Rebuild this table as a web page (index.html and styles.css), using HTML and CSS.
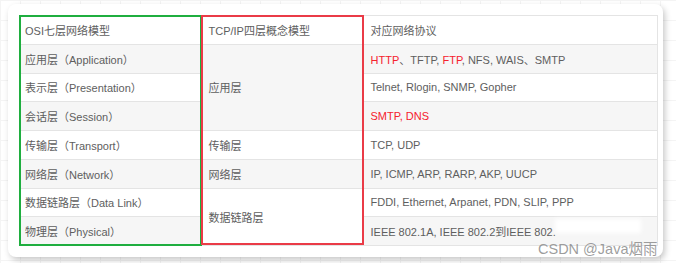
FILE: index.html
```html
<!DOCTYPE html>
<html lang="zh">
<head>
<meta charset="utf-8">
<link rel="stylesheet" href="styles.css">
</head>
<body>
<div class="card">
  <div class="wrap">
    <table class="proto">
      <colgroup><col class="c1"><col class="c2"><col class="c3"></colgroup>
      <tr class="w"><td>OSI七层网络模型</td><td>TCP/IP四层概念模型</td><td>对应网络协议</td></tr>
      <tr class="g"><td>应用层（Application）</td><td rowspan="3">应用层</td><td><span class="red">HTTP</span>、TFTP, <span class="red">FTP</span>, NFS, WAIS、SMTP</td></tr>
      <tr class="w"><td>表示层（Presentation）</td><td>Telnet, Rlogin, SNMP, Gopher</td></tr>
      <tr class="g"><td>会话层（Session）</td><td><span class="red">SMTP, DNS</span></td></tr>
      <tr class="w"><td>传输层（Transport）</td><td>传输层</td><td>TCP, UDP</td></tr>
      <tr class="g"><td>网络层（Network）</td><td>网络层</td><td>IP, ICMP, ARP, RARP, AKP, UUCP</td></tr>
      <tr class="w"><td>数据链路层（Data Link）</td><td rowspan="2">数据链路层</td><td>FDDI, Ethernet, Arpanet, PDN, SLIP, PPP</td></tr>
      <tr class="g"><td>物理层（Physical）</td><td>IEEE 802.1A, IEEE 802.2到IEEE 802.</td></tr>
    </table>
    <div class="box box-green"></div>
    <div class="box box-red"></div>
    <div class="patch"></div>
    <div class="mark">CSDN @Java烟雨</div>
  </div>
</div>
</body>
</html>
```

FILE: styles.css
```css
html, body {
  margin: 0;
  padding: 0;
}
body {
  width: 676px;
  height: 263px;
  overflow: hidden;
  background-color: #ffffff;
  background-image:
    linear-gradient(to right, #f4f4f4 1px, transparent 1px),
    linear-gradient(to bottom, #f4f4f4 1px, transparent 1px);
  background-size: 20px 20px;
  font-family: "Liberation Sans", "Noto Sans CJK SC", sans-serif;
  padding: 4px 0 0 8px;
  box-sizing: border-box;
}
.card {
  width: 655px;
  height: 253px;
  background: #fff;
  border-radius: 8px;
  box-shadow: 2px 3px 6px rgba(0, 0, 0, 0.22);
  padding: 11px 0 0 11px;
  box-sizing: border-box;
}
.wrap {
  position: relative;
  width: 638px;
}
.proto {
  border-collapse: collapse;
  width: 638px;
  table-layout: fixed;
  font-size: 11px;
  color: #5e5e5e;
}
.c1 { width: 182px; }
.c2 { width: 162px; }
.c3 { width: 294px; }
.proto td {
  border: 1px solid #e4e4e4;
  height: 27.75px;
  padding: 0 6px 0 7px;
  vertical-align: middle;
  white-space: nowrap;
}
.proto tr.g td { background: #f6f6f6; }
.proto tr.w td { background: #fff; }
.proto td:first-child { border-left: none; padding-left: 6px; }
.red { color: #f5222d; }
.box {
  position: absolute;
  top: 0;
  bottom: 0;
  border: 2px solid;
  box-sizing: border-box;
  pointer-events: none;
}
.box-green {
  left: 0;
  width: 183px;
  border-color: #1fae3f;
}
.box-red {
  left: 182px;
  width: 163px;
  border-color: #ea3b47;
  bottom: 1px;
}
.patch {
  position: absolute;
  left: 536px;
  top: 204px;
  width: 86px;
  height: 14px;
  background: #fff;
  filter: blur(2px);
}
.mark {
  position: absolute;
  left: 519px;
  top: 222px;
  font-size: 14.5px;
  color: rgba(140, 140, 140, 0.85);
  white-space: nowrap;
}
```
